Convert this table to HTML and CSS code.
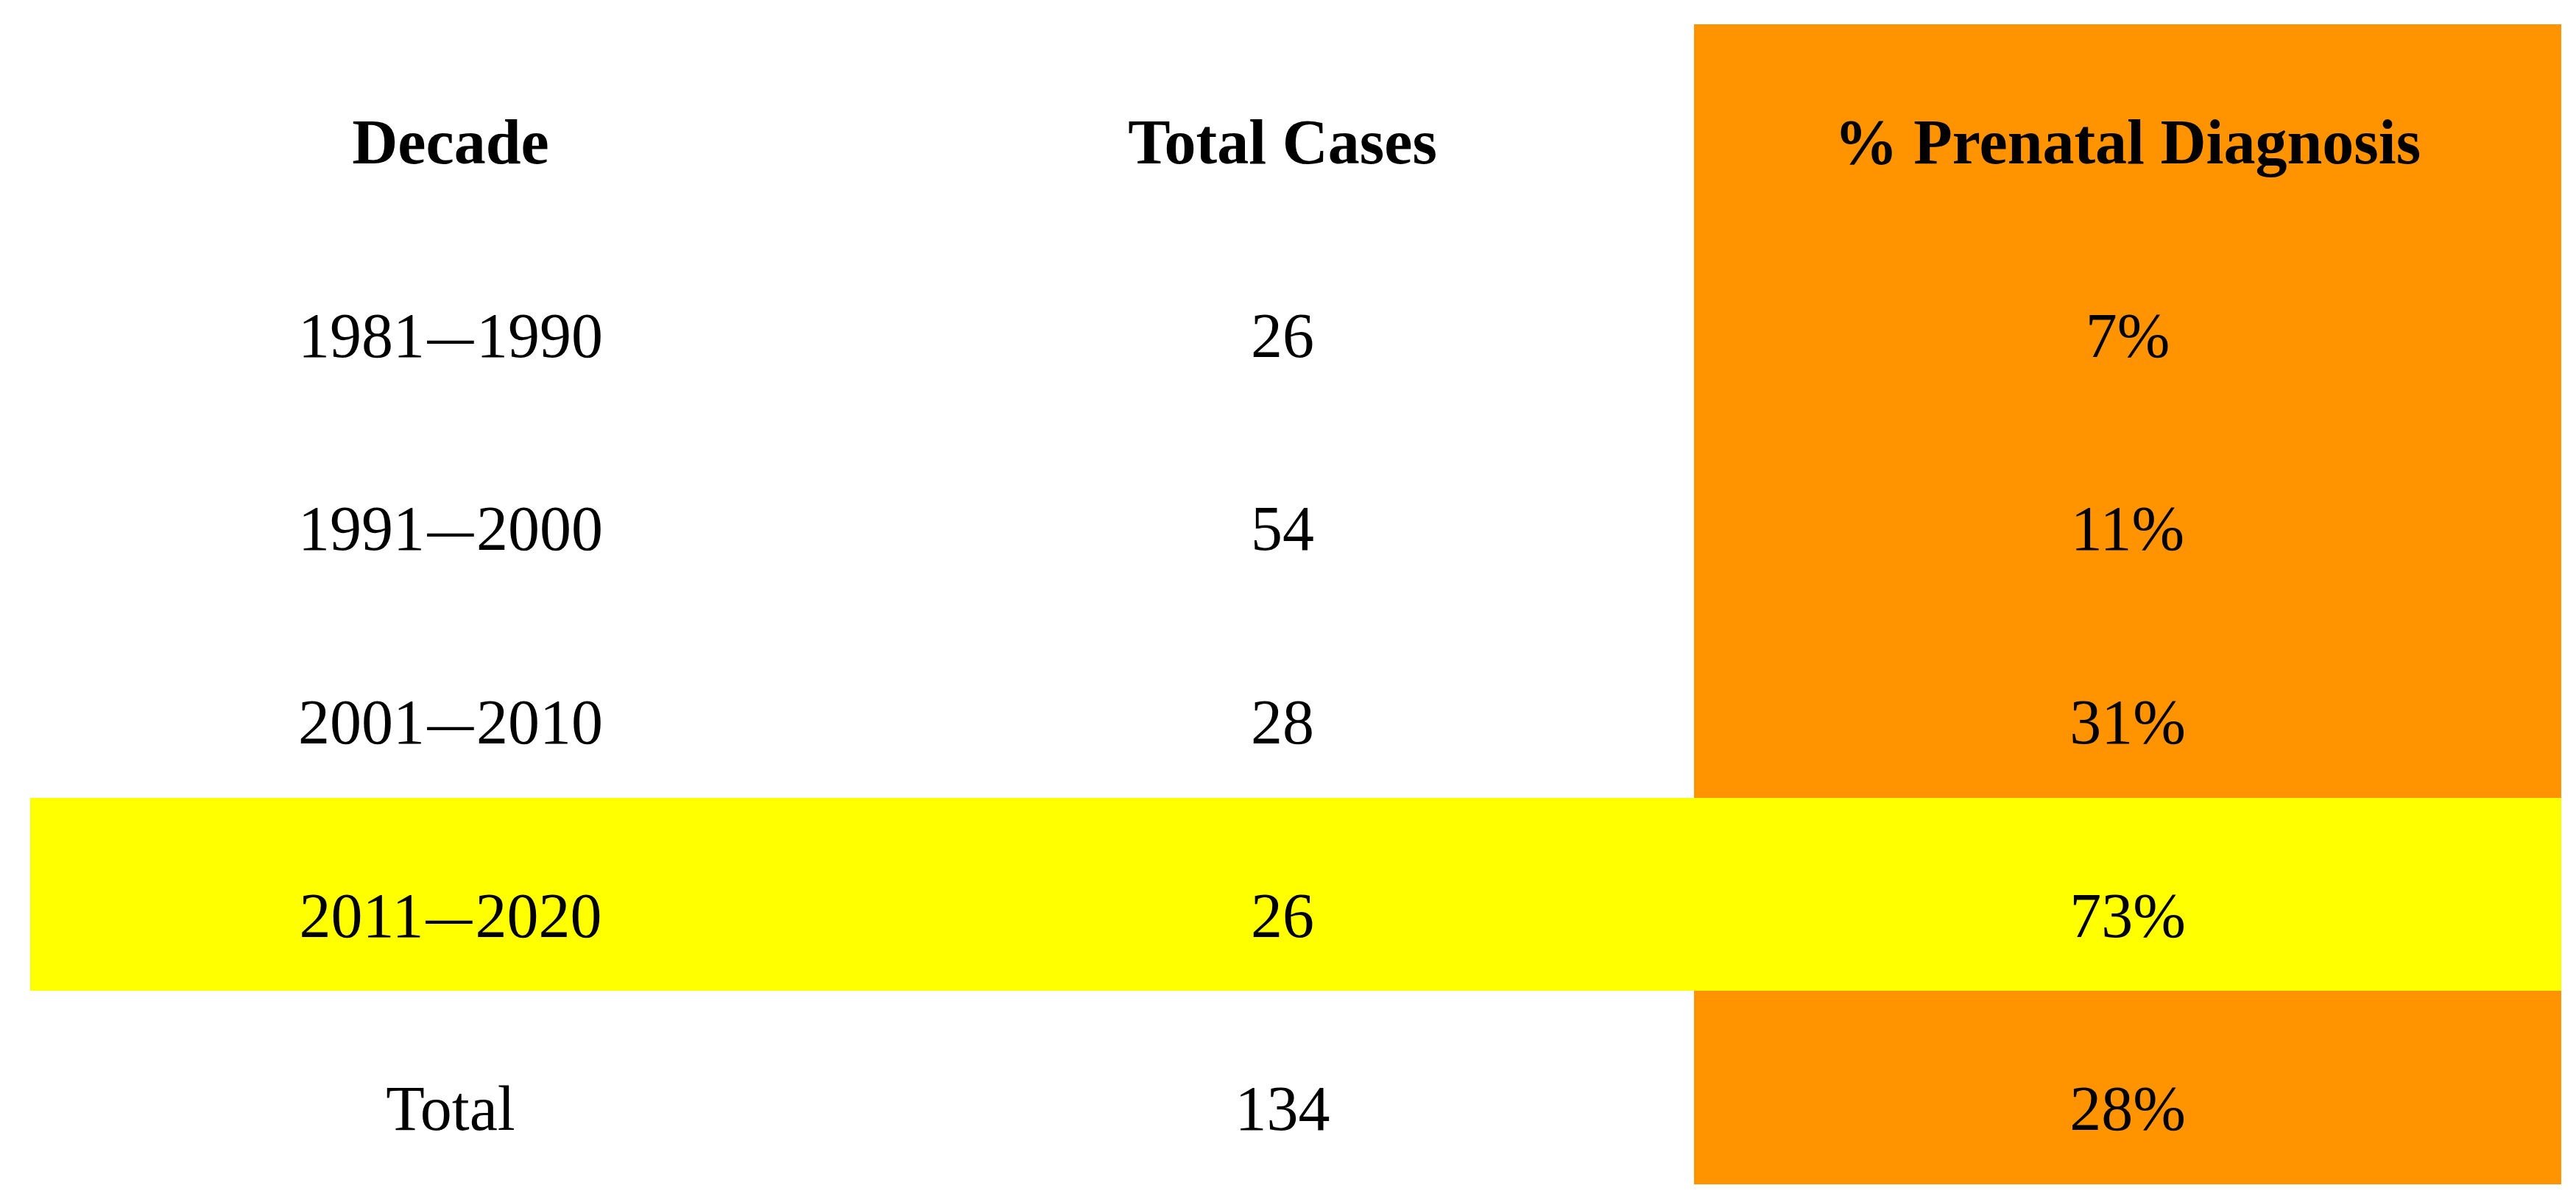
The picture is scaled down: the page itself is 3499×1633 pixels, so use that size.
FILE: index.html
```html
<!DOCTYPE html>
<html lang="en">
<head>
  <meta charset="UTF-8" />
  <title>Prenatal Diagnosis by Decade</title>
  <link rel="stylesheet" href="styles.css">
</head>
<body>
  <!-- Cases and prenatal diagnosis rate per decade -->
  <table class="decades">
    <colgroup>
      <col class="col-decade">
      <col class="col-cases">
      <col class="col-prenatal">
    </colgroup>
    <thead>
      <tr>
        <th>Decade</th>
        <th>Total Cases</th>
        <th class="prenatal">% Prenatal Diagnosis</th>
      </tr>
    </thead>
    <tbody>
      <tr>
        <td>1981<span class="dash">—</span>1990</td>
        <td>26</td>
        <td class="prenatal">7%</td>
      </tr>
      <tr>
        <td>1991<span class="dash">—</span>2000</td>
        <td>54</td>
        <td class="prenatal">11%</td>
      </tr>
      <tr>
        <td>2001<span class="dash">—</span>2010</td>
        <td>28</td>
        <td class="prenatal">31%</td>
      </tr>
      <tr class="highlight">
        <td>2011<span class="dash">—</span>2020</td>
        <td>26</td>
        <td class="prenatal">73%</td>
      </tr>
      <tr>
        <td>Total</td>
        <td>134</td>
        <td class="prenatal">28%</td>
      </tr>
    </tbody>
  </table>
</body>
</html>
```

FILE: styles.css
```css
html, body {
  margin: 0;
  padding: 0;
}
body {
  background: #fff;
  color: #000;
  font-family: "Liberation Serif", "Times New Roman", serif;
  padding: 33px 0 0 41px;
}
/* Table */
.decades {
  border-collapse: collapse;
  border-spacing: 0;
  table-layout: fixed;
  width: 3438px;
}
.col-decade {
  width: 1142px;
}
.col-cases {
  width: 1118px;
}
.col-prenatal {
  width: 1178px;
}
.decades th,
.decades td {
  height: 262.67px;
  box-sizing: border-box;
  padding: 110px 0 0 0;
  vertical-align: top;
  text-align: center;
  font-size: 86px;
  line-height: normal;
  white-space: nowrap;
}
.decades th {
  font-weight: bold;
}
.decades .prenatal {
  background: #ff9300;
}
.decades tr.highlight td {
  background: #ffff00;
}
/* Shorter dash with a bit of air either side, like the source table */
.dash {
  display: inline-block;
  transform: scaleX(0.73);
  margin: 0 -8px;
}
```
